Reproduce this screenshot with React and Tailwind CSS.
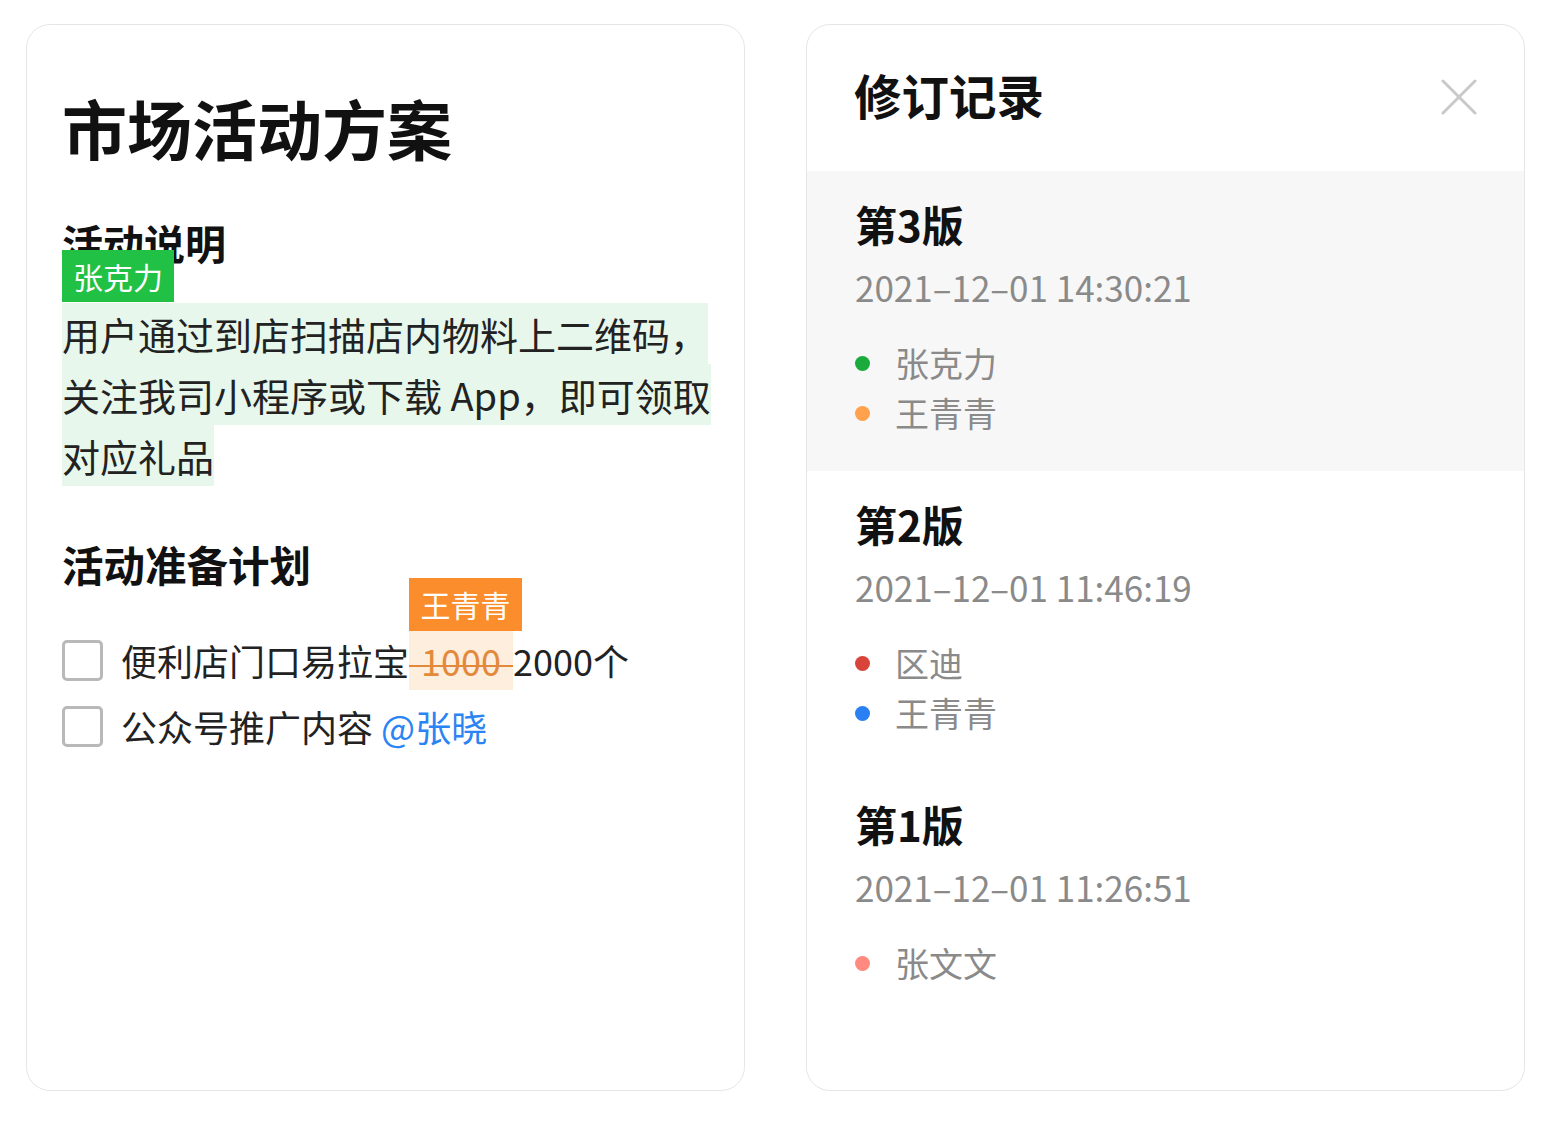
import React from 'react';

const versions = [
  {
    title: '第3版',
    time: '2021–12–01 14:30:21',
    active: true,
    people: [
      { name: '张克力', dot: 'bg-[#1aab3c]' },
      { name: '王青青', dot: 'bg-[#ffa14d]' },
    ],
  },
  {
    title: '第2版',
    time: '2021–12–01 11:46:19',
    people: [
      { name: '区迪', dot: 'bg-[#d8443a]' },
      { name: '王青青', dot: 'bg-[#2a7ff2]' },
    ],
  },
  {
    title: '第1版',
    time: '2021–12–01 11:26:51',
    people: [{ name: '张文文', dot: 'bg-[#ff8a80]' }],
  },
];

function Checkbox() {
  return <span className="w-[41px] h-[41px] shrink-0 rounded-[5px] border-[3px] border-[#b9b9b9] bg-white" />;
}

function DocCard() {
  return (
    <div className="w-[719px] h-[1067px] rounded-[24px] border border-[#e6e6e6] bg-white px-[35px] pt-[70px]">
      <h1 className="text-[65px] leading-none font-bold text-[#111]">市场活动方案</h1>

      <h2 className="mt-[62px] text-[41px] leading-none font-bold text-[#111]">活动说明</h2>

      <div className="relative mt-[40px]">
        <span className="absolute -top-[53px] left-0 h-[52px] px-[11px] flex items-center bg-[#21c145] text-white text-[30px] leading-none">
          张克力
        </span>
        <p className="text-[38px] leading-[61px] text-[#222] whitespace-nowrap">
          <span className="bg-[#e7f7ec] py-[3px]">
            用户通过到店扫描店内物料上二维码，
            <br />
            关注我司小程序或下载 App，即可领取
            <br />
            对应礼品
          </span>
        </p>
      </div>

      <h2 className="mt-[58px] text-[41.5px] leading-none font-bold text-[#111]">活动准备计划</h2>

      <div className="mt-[45px] flex flex-col gap-[7px] text-[36px] text-[#222]">
        <div className="flex items-center h-[59px]">
          <Checkbox />
          <span className="ml-[18px] whitespace-nowrap leading-[59px]">便利店门口易拉宝</span>
          <span className="relative h-[59px] leading-[59px] px-[4px] bg-[#feeedd] text-[#e3893c] whitespace-nowrap">
            <span className="absolute -top-[53px] left-0 h-[53px] w-[113px] flex items-center justify-center bg-[#fb8d2c] text-white text-[30px] leading-none">
              王青青
            </span>
            <span className="absolute left-0 right-0 top-[34px] h-[2px] bg-[#e3893c]" />
            &nbsp;1000&nbsp;
          </span>
          <span className="whitespace-nowrap leading-[59px]">2000个</span>
        </div>
        <div className="flex items-center h-[59px]">
          <Checkbox />
          <span className="ml-[18px] whitespace-nowrap leading-[59px]">
            公众号推广内容 <span className="text-[#2b84f3]">@张晓</span>
          </span>
        </div>
      </div>
    </div>
  );
}

function HistoryCard() {
  return (
    <div className="w-[719px] h-[1067px] rounded-[24px] border border-[#e6e6e6] bg-white overflow-hidden">
      <div className="h-[146px] flex items-center justify-between pl-[47px] pr-[47px] pb-[6px]">
        <h2 className="text-[47.5px] leading-none font-bold text-[#111]">修订记录</h2>
        <svg width="36" height="36" viewBox="0 0 36 36" fill="none" stroke="#c9c9c9" strokeWidth="3" strokeLinecap="round" className="mt-[4px]">
          <path d="M2 2L34 34M34 2L2 34" />
        </svg>
      </div>
      {versions.map((v) => (
        <div
          key={v.title}
          className={`h-[300px] pl-[48px] pt-[32px] ${v.active ? 'bg-[#f7f7f7]' : 'bg-white'}`}
        >
          <div className="text-[42px] leading-none font-bold text-[#111]">{v.title}</div>
          <div className="mt-[24px] text-[35px] leading-none text-[#8a8a8a]">{v.time}</div>
          <div className="mt-[34px] flex flex-col">
            {v.people.map((p) => (
              <div key={p.name} className="flex items-center h-[50px] gap-[25px]">
                <span className={`w-[15px] h-[15px] rounded-full ${p.dot}`} />
                <span className="text-[34px] leading-none text-[#8a8a8a]">{p.name}</span>
              </div>
            ))}
          </div>
        </div>
      ))}
    </div>
  );
}

export default function App() {
  return (
    <div
      className="w-[1557px] h-[1134px] bg-white flex gap-[61px] pl-[26px] pt-[24px]"
      style={{ fontFamily: '"Noto Sans CJK SC", "Noto Sans", sans-serif' }}
    >
      <DocCard />
      <HistoryCard />
    </div>
  );
}
